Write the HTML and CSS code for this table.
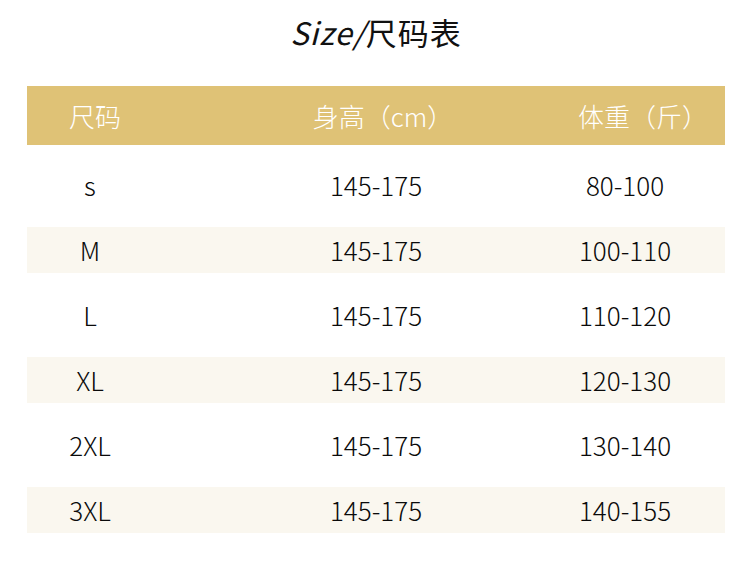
FILE: index.html
```html
<!DOCTYPE html>
<html lang="zh">
<head>
<meta charset="utf-8">
<link rel="stylesheet" href="styles.css">
</head>
<body>
<div class="page">
  <h1 class="title"><span class="latin">Size/</span>尺码表</h1>
  <div class="table">
    <div class="row head">
      <div class="cell c1">尺码</div>
      <div class="cell c2">身高（cm）</div>
      <div class="cell c3">体重（斤）</div>
    </div>
    <div class="row tall first">
      <div class="cell c1">s</div>
      <div class="cell c2">145-175</div>
      <div class="cell c3">80-100</div>
    </div>
    <div class="row short">
      <div class="cell c1">M</div>
      <div class="cell c2">145-175</div>
      <div class="cell c3">100-110</div>
    </div>
    <div class="row tall">
      <div class="cell c1">L</div>
      <div class="cell c2">145-175</div>
      <div class="cell c3">110-120</div>
    </div>
    <div class="row short">
      <div class="cell c1">XL</div>
      <div class="cell c2">145-175</div>
      <div class="cell c3">120-130</div>
    </div>
    <div class="row tall">
      <div class="cell c1">2XL</div>
      <div class="cell c2">145-175</div>
      <div class="cell c3">130-140</div>
    </div>
    <div class="row short">
      <div class="cell c1">3XL</div>
      <div class="cell c2">145-175</div>
      <div class="cell c3">140-155</div>
    </div>
  </div>
</div>
</body>
</html>
```
FILE: styles.css
```css
html, body {
  margin: 0;
  padding: 0;
  background: #ffffff;
}
body {
  font-family: "Noto Sans CJK SC", "Noto Sans", sans-serif;
  color: #0a0a0a;
  width: 750px;
  height: 566px;
  overflow: hidden;
}
.page {
  padding: 0 25px 0 27px;
}
.title {
  margin: 0;
  height: 86px;
  padding-top: 10px;
  box-sizing: border-box;
  text-align: center;
  font-size: 31px;
  font-weight: 400;
  line-height: 44px;
  letter-spacing: 1px;
  color: #111111;
}
.title .latin {
  font-style: italic;
  font-weight: 400;
  font-family: "Noto Sans CJK SC", "Noto Sans", sans-serif;
}
.table {
  width: 698px;
}
.row {
  display: grid;
  grid-template-columns: 132px 434px 132px;
  align-items: center;
  font-size: 26px;
  font-weight: 300;
}
.cell {
  display: flex;
  justify-content: center;
  white-space: nowrap;
  line-height: 32px;
}
.row .c1 {
  padding-right: 6px;
}
.row .c3 {
  padding-right: 68px;
}
.head {
  height: 59px;
  background: #dfc276;
  color: #ffffff;
}
.head .c1 {
  padding-left: 4px;
  padding-right: 0;
}
.head .c2 {
  padding-left: 14px;
}
.head .c3 {
  padding-right: 32px;
}
.tall {
  height: 84px;
  background: #ffffff;
}
.tall.first {
  height: 82px;
}
.tall.first .cell {
  margin-top: -3px;
}
.short {
  height: 46px;
  background: #faf7ef;
}
```
